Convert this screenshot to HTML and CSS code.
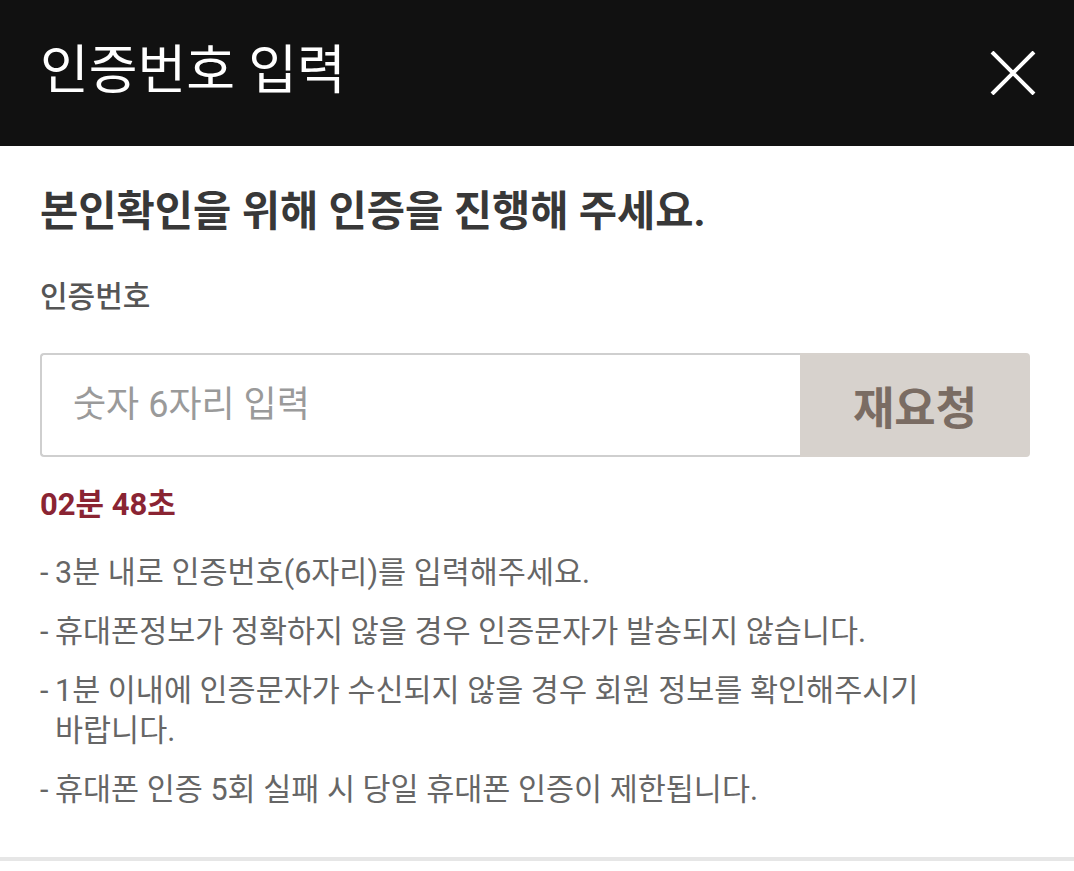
FILE: index.html
```html
<!DOCTYPE html>
<html lang="ko">
<head>
    <meta charset="utf-8">
    <title>인증번호 입력</title>
    <link rel="stylesheet" href="styles.css">
</head>
<body>
    <div class="popup">
        <div class="popup-head">
            <h1 class="popup-title">인증번호 입력</h1>
            <button class="btn-close" type="button" aria-label="닫기">
                <svg width="46" height="44" viewBox="0 0 46 44">
                    <path d="M2 1 L44 43 M44 1 L2 43" stroke="#fff" stroke-width="4" fill="none"/>
                </svg>
            </button>
        </div>

        <div class="popup-body">
            <p class="lead">본인확인을 위해 인증을 진행해 주세요.</p>
            <p class="field-label">인증번호</p>

            <div class="input-row">
                <input class="code-input" type="text" placeholder="숫자 6자리 입력">
                <button class="btn-retry" type="button">재요청</button>
            </div>

            <p class="timer">02분 48초</p>

            <ul class="notes">
                <li>3분 내로 인증번호(6자리)를 입력해주세요.</li>
                <li>휴대폰정보가 정확하지 않을 경우 인증문자가 발송되지 않습니다.</li>
                <li>1분 이내에 인증문자가 수신되지 않을 경우 회원 정보를 확인해주시기 바랍니다.</li>
                <li>휴대폰 인증 5회 실패 시 당일 휴대폰 인증이 제한됩니다.</li>
            </ul>
        </div>
    </div>
</body>
</html>
```

FILE: styles.css
```css
html, body {
    margin: 0;
    padding: 0;
    background: #fff;
}

body {
    font-family: Roboto, "Noto Sans CJK KR", sans-serif;
    color: #333;
}

.popup {
    width: 1074px;
    height: 861px;
    box-sizing: border-box;
    border-bottom: 4px solid #e6e6e6;
}

.popup-head {
    height: 146px;
    background: #111;
    display: flex;
    align-items: center;
    justify-content: space-between;
    padding: 0 38px 0 40px;
}

.popup-title {
    margin: 0 0 4px;
    font-size: 53px;
    font-weight: 400;
    line-height: 60px;
    color: #fff;
}

.btn-close {
    border: 0;
    background: none;
    padding: 0;
    display: flex;
}

.popup-body {
    padding: 42px 44px 0 40px;
}

.lead {
    margin: 0;
    font-size: 41.6px;
    font-weight: 700;
    color: #383838;
    line-height: 48px;
}

.field-label {
    margin: 41px 0 0;
    font-size: 30px;
    font-weight: 500;
    color: #555;
    line-height: 40px;
}

.input-row {
    display: flex;
    margin-top: 36px;
    height: 104px;
}

.code-input {
    flex: 1;
    box-sizing: border-box;
    border: 2px solid #cfcfcf;
    border-right: 0;
    border-radius: 4px 0 0 4px;
    padding: 0 0 0 31px;
    font-family: Roboto, "Noto Sans CJK KR", sans-serif;
    font-size: 36px;
    color: #333;
    outline: none;
}

.code-input::placeholder {
    color: #9a9a9a;
}

.btn-retry {
    width: 230px;
    border: 0;
    border-radius: 0 4px 4px 0;
    background: #d7d2cd;
    font-family: Roboto, "Noto Sans CJK KR", sans-serif;
    font-size: 45px;
    font-weight: 700;
    color: #7a6c63;
}

.timer {
    margin: 28px 0 0;
    font-size: 31px;
    font-weight: 700;
    color: #8a2433;
    line-height: 40px;
}

.notes {
    list-style: none;
    margin: 28px 0 0;
    padding: 0;
    width: 950px;
    font-size: 30.5px;
    color: #666;
    line-height: 40px;
    word-break: keep-all;
}

.notes li {
    position: relative;
    padding-left: 15px;
    margin-bottom: 19px;
}

.notes li::before {
    content: "-";
    position: absolute;
    left: 0;
    top: 0;
}
```
